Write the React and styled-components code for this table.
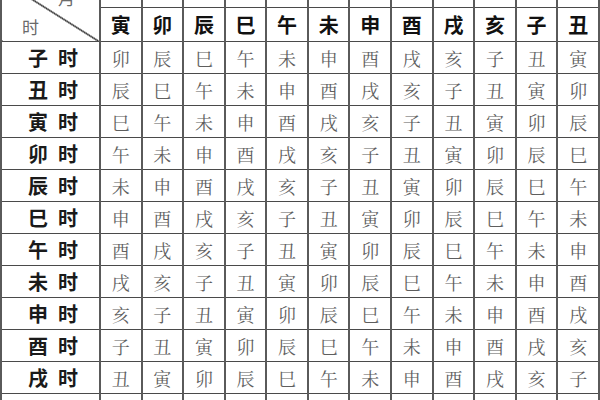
import React from "react";
import styled, { createGlobalStyle } from "styled-components";

const GlobalStyle = createGlobalStyle`
  html, body {
    margin: 0;
    padding: 0;
    background: #ffffff;
  }
`;

const branches = ["子", "丑", "寅", "卯", "辰", "巳", "午", "未", "申", "酉", "戌", "亥"];

// month columns start at 寅
const monthBranches = branches.slice(2).concat(branches.slice(0, 2));

const Page = styled.div`
  width: 600px;
  height: 400px;
  overflow: hidden;
  background: #fff;
`;

const Table = styled.table`
  margin-top: -21px;
  width: 600px;
  table-layout: fixed;
  border-collapse: collapse;
  font-family: "Noto Sans CJK SC", "Noto Sans", sans-serif;

  td {
    border: 1px solid #4a4a4a;
    border-left: 2px solid #5a5a5a;
    border-right: 2px solid #5a5a5a;
    padding: 0;
    text-align: center;
    vertical-align: middle;
  }
`;

const TopRow = styled.tr`
  height: 28px;
`;

const HeadRow = styled.tr`
  height: 34px;
`;

const BodyRow = styled.tr`
  height: 32px;
`;

const Corner = styled.td`
  position: relative;
  background: linear-gradient(
    to top right,
    transparent calc(50% - 1px),
    #3a3a3a calc(50% - 0.5px),
    #3a3a3a calc(50% + 0.5px),
    transparent calc(50% + 1px)
  );
`;

const CornerLabel = styled.span`
  position: absolute;
  font-size: 17px;
  color: #6a6a6a;
  line-height: 1;
  ${({ $top }) => ($top ? "top: 9px; right: 24px;" : "bottom: 6px; left: 20px;")}
`;

const HeadCell = styled.td`
  font-size: 20px;
  font-weight: 700;
  color: #111;
  line-height: 1;
`;

const RowLabel = styled.td`
  font-size: 20px;
  font-weight: 700;
  color: #1a1a1a;
  letter-spacing: 10px;
  padding-left: 15px !important;
  line-height: 1;
`;

const Cell = styled.td`
  font-family: "Noto Serif CJK SC", "Noto Sans CJK SC", serif;
  font-size: 18px;
  font-weight: 400;
  color: #5e5e5e;
  line-height: 1;
`;

export default function App() {
  return (
    <Page>
      <GlobalStyle />
      <Table>
        <colgroup>
          <col style={{ width: "99px" }} />
          {monthBranches.map((b) => (
            <col key={b} />
          ))}
        </colgroup>
        <tbody>
          <TopRow>
            <Corner rowSpan={2}>
              <CornerLabel $top>月</CornerLabel>
              <CornerLabel>时</CornerLabel>
            </Corner>
            {monthBranches.map((b) => (
              <td key={b} />
            ))}
          </TopRow>
          <HeadRow>
            {monthBranches.map((b) => (
              <HeadCell key={b}>{b}</HeadCell>
            ))}
          </HeadRow>
          {branches.map((hour, i) => (
            <BodyRow key={hour}>
              <RowLabel>{hour}时</RowLabel>
              {monthBranches.map((_, j) => (
                <Cell key={j}>{branches[(i + j + 3) % 12]}</Cell>
              ))}
            </BodyRow>
          ))}
        </tbody>
      </Table>
    </Page>
  );
}
